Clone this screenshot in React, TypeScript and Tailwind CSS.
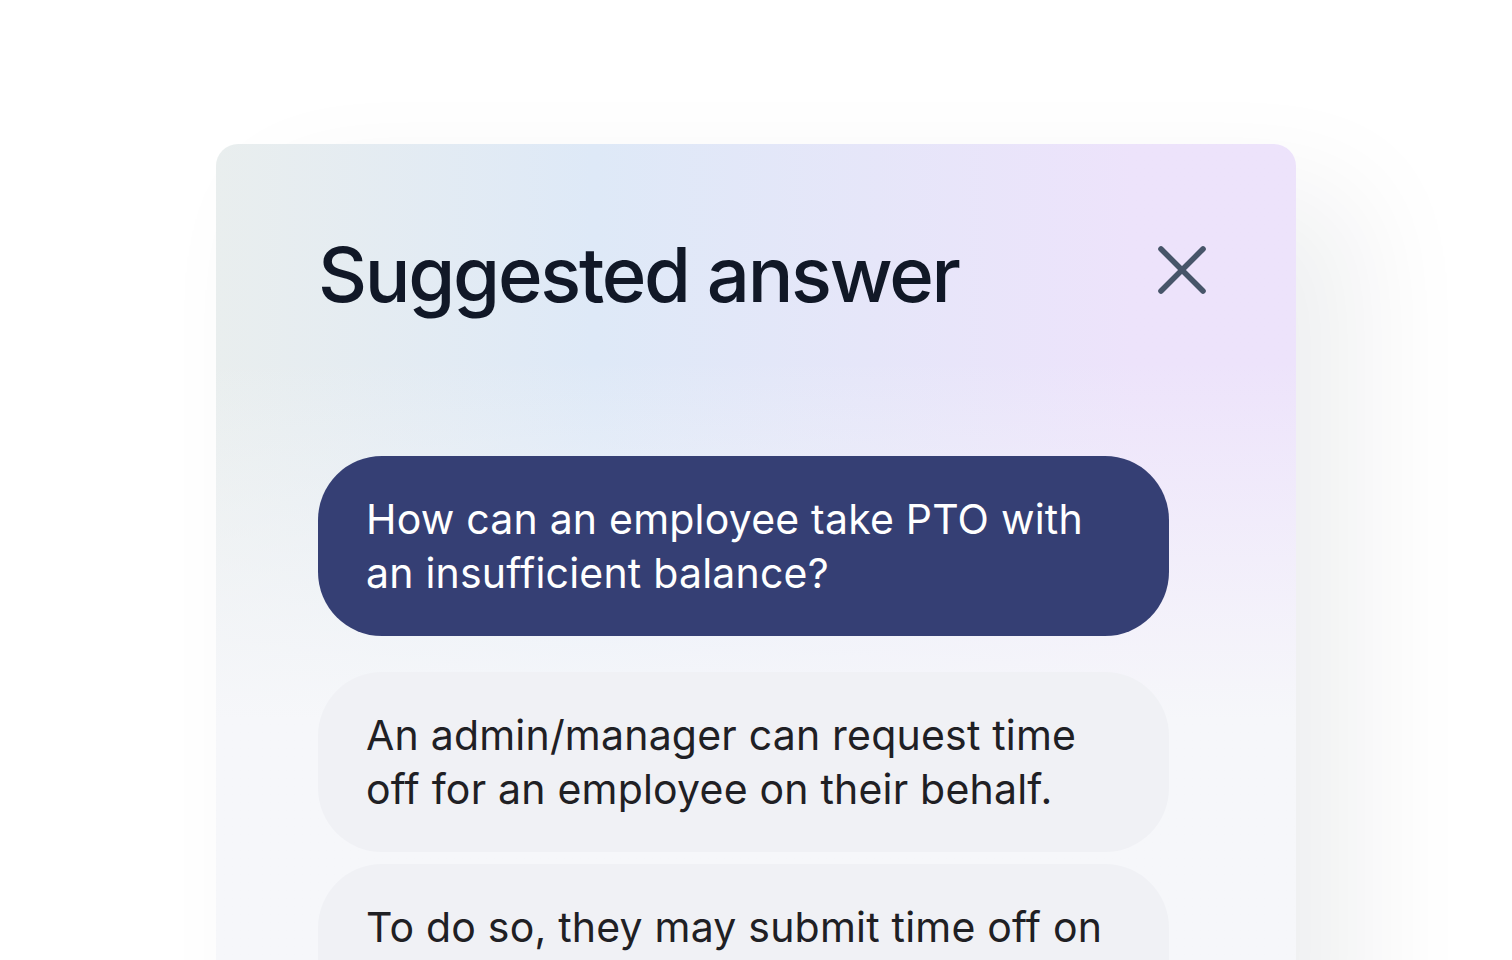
import { X } from 'lucide-react';

const answers = [
  'An admin/manager can request time off for an employee on their behalf.',
  'To do so, they may submit time off on behalf of the employee from their profile.',
];

export default function App() {
  return (
    <div className="h-screen overflow-hidden bg-white pt-[144px] font-['Inter',sans-serif]">
      <div className="mx-auto h-[900px] w-[1080px] overflow-hidden rounded-t-[22px] bg-linear-to-r from-[#e9eeee] via-[#dee9f7] via-35% to-[#ede3fb] to-85% shadow-[60px_50px_120px_rgba(15,23,42,0.07)]">
        <div className="h-full bg-linear-to-b from-transparent from-[24%] to-[#f6f7fa] to-[64%] pl-[102px] pr-[72px]">
          <div className="flex items-start justify-between pt-[92px]">
            <h2 className="text-[76px] leading-[76px] font-medium tracking-[-0.03em] text-[#111827]">
              Suggested answer
            </h2>
            <button type="button" className="-mt-2 text-[#475569]">
              <X size={84} strokeWidth={1.6} />
            </button>
          </div>

          <div className="mt-[144px] w-[851px]">
            <div className="rounded-[64px] bg-[#353f74] px-12 py-9 text-[41px] leading-[54px] tracking-[0.005em] text-white">
              How can an employee take PTO with an insufficient balance?
            </div>

            <div className="mt-9 flex flex-col gap-3">
              {answers.map((a) => (
                <div
                  key={a}
                  className="rounded-[64px] bg-[#f0f1f5] px-12 py-9 text-[41px] leading-[54px] tracking-[0.005em] text-[#1f2024]"
                >
                  {a}
                </div>
              ))}
            </div>
          </div>
        </div>
      </div>
    </div>
  );
}
